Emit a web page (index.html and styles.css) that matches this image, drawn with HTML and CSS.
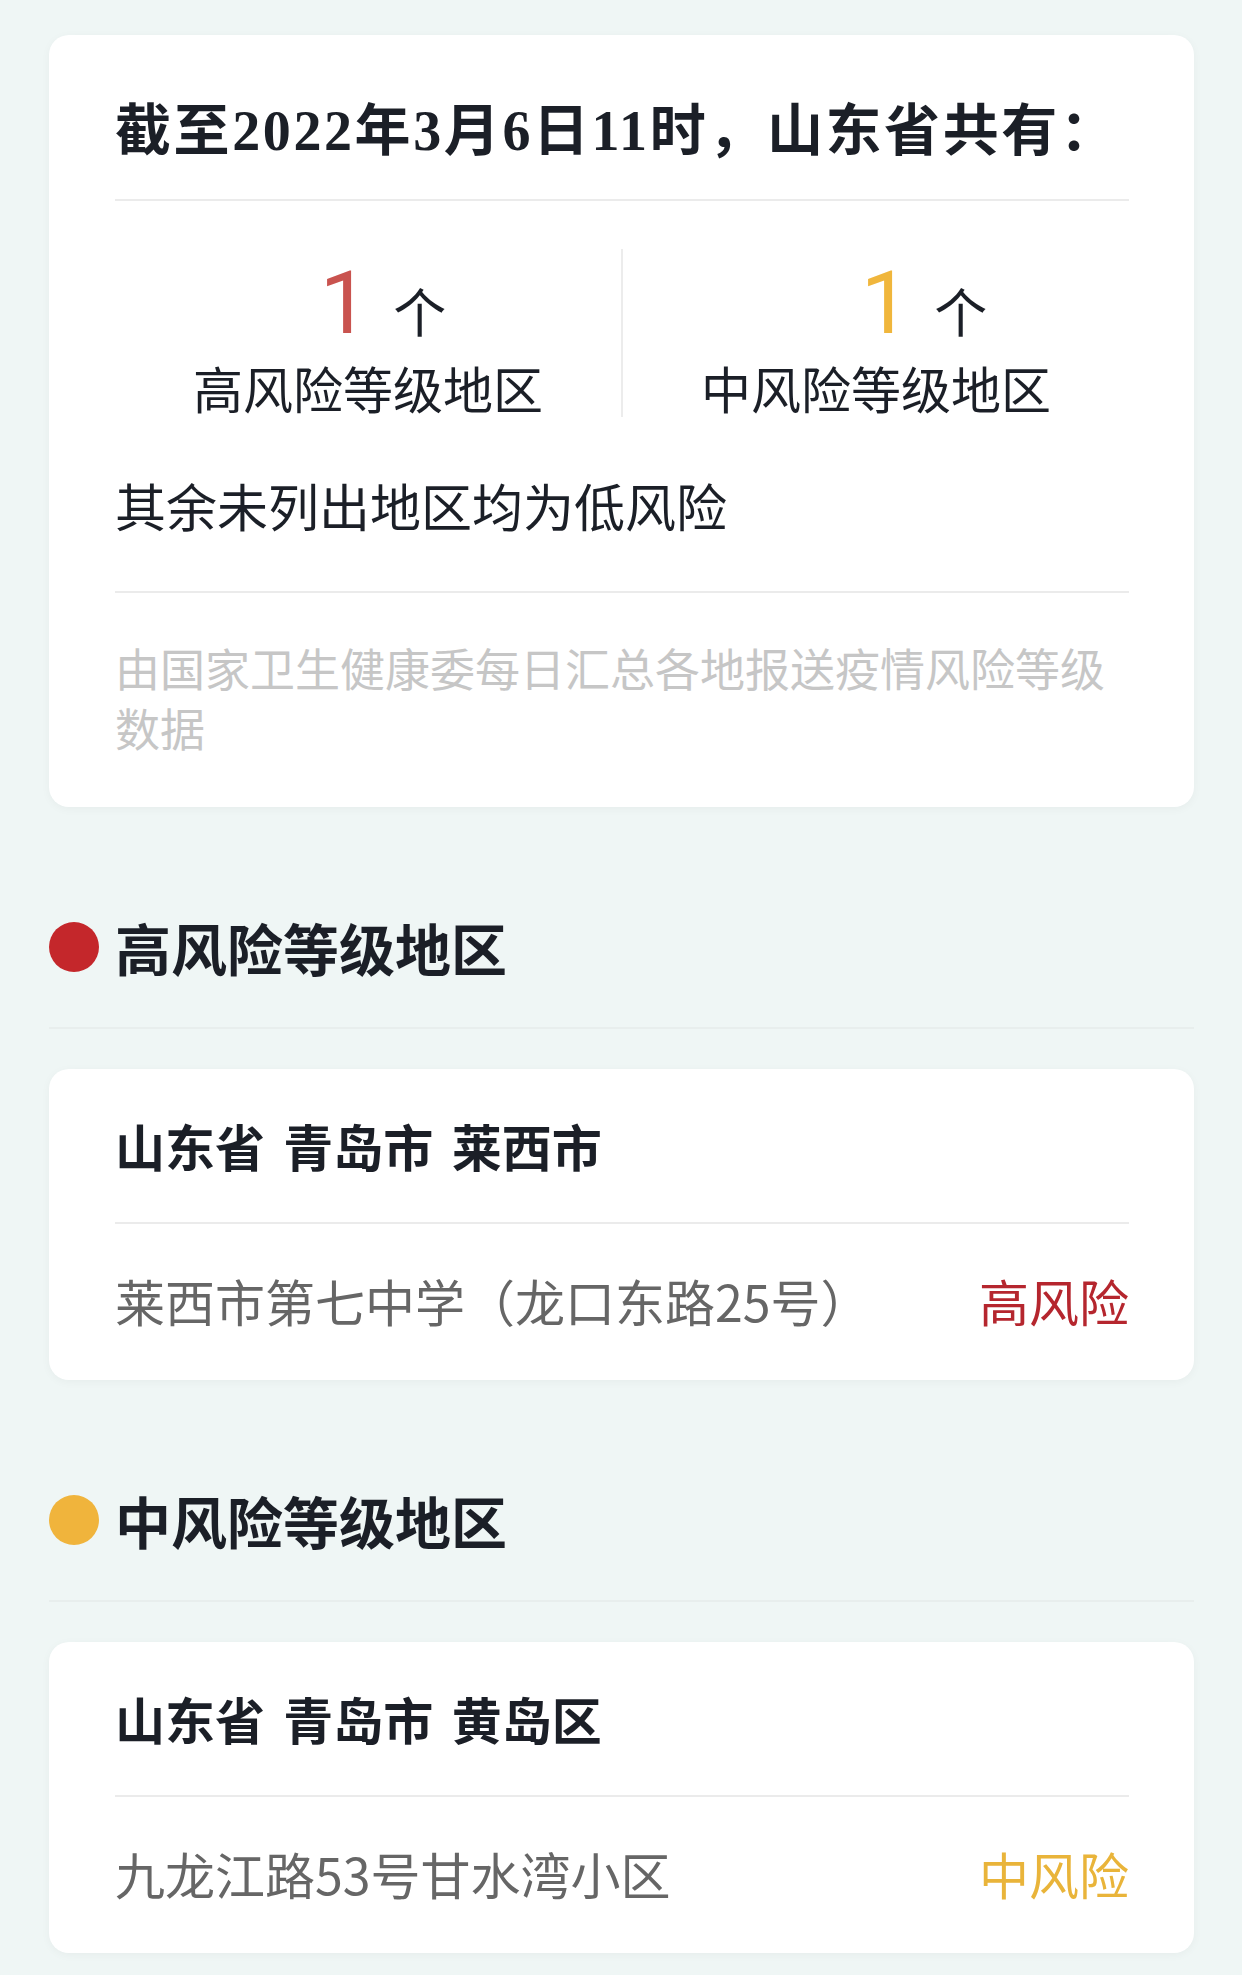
FILE: index.html
```html
<html>
	<head>
		<meta charset="utf-8">
		<title>疫情风险等级查询</title>
		<link rel="stylesheet" href="styles.css">
	</head>
	<body>
		<div class="page">

			<div class="card summary">
				<h1 class="summary-title">截至2022年3月6日11时，山东省共有：</h1>

				<div class="stats">
					<div class="stat stat-high">
						<div class="stat-count"><span class="num">1</span><span class="unit">个</span></div>
						<div class="stat-label">高风险等级地区</div>
					</div>
					<div class="stat stat-mid">
						<div class="stat-count"><span class="num">1</span><span class="unit">个</span></div>
						<div class="stat-label">中风险等级地区</div>
					</div>
				</div>

				<p class="summary-low">其余未列出地区均为低风险</p>
				<p class="summary-note">由国家卫生健康委每日汇总各地报送疫情风险等级数据</p>
			</div>

			<div class="section-head">
				<span class="dot dot-high"></span>
				<h2>高风险等级地区</h2>
			</div>

			<div class="card area">
				<h3 class="area-title">山东省 青岛市 莱西市</h3>
				<div class="area-row">
					<span class="place">莱西市第七中学（龙口东路25号）</span>
					<span class="level level-high">高风险</span>
				</div>
			</div>

			<div class="section-head">
				<span class="dot dot-mid"></span>
				<h2>中风险等级地区</h2>
			</div>

			<div class="card area">
				<h3 class="area-title">山东省 青岛市 黄岛区</h3>
				<div class="area-row">
					<span class="place">九龙江路53号甘水湾小区</span>
					<span class="level level-mid">中风险</span>
				</div>
			</div>

		</div>
	</body>
</html>
```

FILE: styles.css
```css
* {
	margin: 0;
	padding: 0;
}

body {
	background: #eff6f5;
	color: #1b1f27;
	font-family: "Noto Sans CJK SC", "Noto Sans", sans-serif;
}

.page {
	padding: 35px 48px 20px 49px;
}

.card {
	background: #fff;
	border-radius: 20px;
	box-shadow: 0 2px 10px rgba(0, 0, 0, 0.04);
	padding: 0 65px 0 66px;
}

/* summary card */

.summary {
	padding-top: 68px;
	padding-bottom: 49px;
}

.summary-title {
	font-family: "Liberation Serif", "Noto Sans CJK SC", serif;
	font-size: 56px;
	line-height: 56px;
	font-weight: 700;
	letter-spacing: 2.6px;
	padding-bottom: 40px;
	border-bottom: 2px solid #ebebeb;
	margin-bottom: 48px;
}

.stats {
	display: flex;
}

.stat {
	flex: 1;
	padding: 10px 0 5px;
	text-align: center;
}

.stat-high {
	border-right: 2px solid #ececec;
}

.stat-count {
	display: flex;
	justify-content: center;
	align-items: baseline;
	height: 88px;
	gap: 24px;
}

.stat-high .stat-count {
	padding-left: 30px;
}

.stat-mid .stat-count {
	padding-left: 96px;
}

.num {
	font-family: Roboto, sans-serif;
	font-size: 88px;
	line-height: 88px;
}

.stat-high .num {
	color: #c9534f;
}

.stat-mid .num {
	color: #f0b63c;
}

.unit {
	font-size: 53px;
	line-height: 53px;
}

.stat-label {
	font-size: 50px;
	line-height: 50px;
	margin-top: 15px;
}

.summary-low {
	font-size: 51px;
	line-height: 51px;
	margin-top: 63px;
	padding-bottom: 60px;
	border-bottom: 2px solid #ebebeb;
}

.summary-note {
	font-size: 45px;
	line-height: 60px;
	color: #c6c6c6;
	margin-top: 45px;
}

/* section headings */

.section-head {
	display: flex;
	align-items: center;
	gap: 16px;
	margin-top: 112px;
	padding-bottom: 52px;
	border-bottom: 2px solid #e8eeed;
	margin-bottom: 40px;
}

.section-head h2 {
	font-size: 56px;
	line-height: 56px;
	font-weight: 700;
}

.dot {
	width: 50px;
	height: 50px;
	border-radius: 50%;
}

.dot-high {
	background: #c4272b;
}

.dot-mid {
	background: #f0b43c;
}

/* area cards */

.area {
	padding-top: 51px;
	padding-bottom: 55px;
}

.area-title {
	font-size: 50px;
	line-height: 50px;
	font-weight: 700;
	word-spacing: 7px;
	padding-bottom: 52px;
	border-bottom: 2px solid #ebebeb;
}

.area-row {
	display: flex;
	justify-content: space-between;
	font-size: 50px;
	line-height: 50px;
	margin-top: 51px;
}

.place {
	color: #666;
}

.level-high {
	color: #b5262e;
}

.level-mid {
	color: #e9b43a;
}
```
